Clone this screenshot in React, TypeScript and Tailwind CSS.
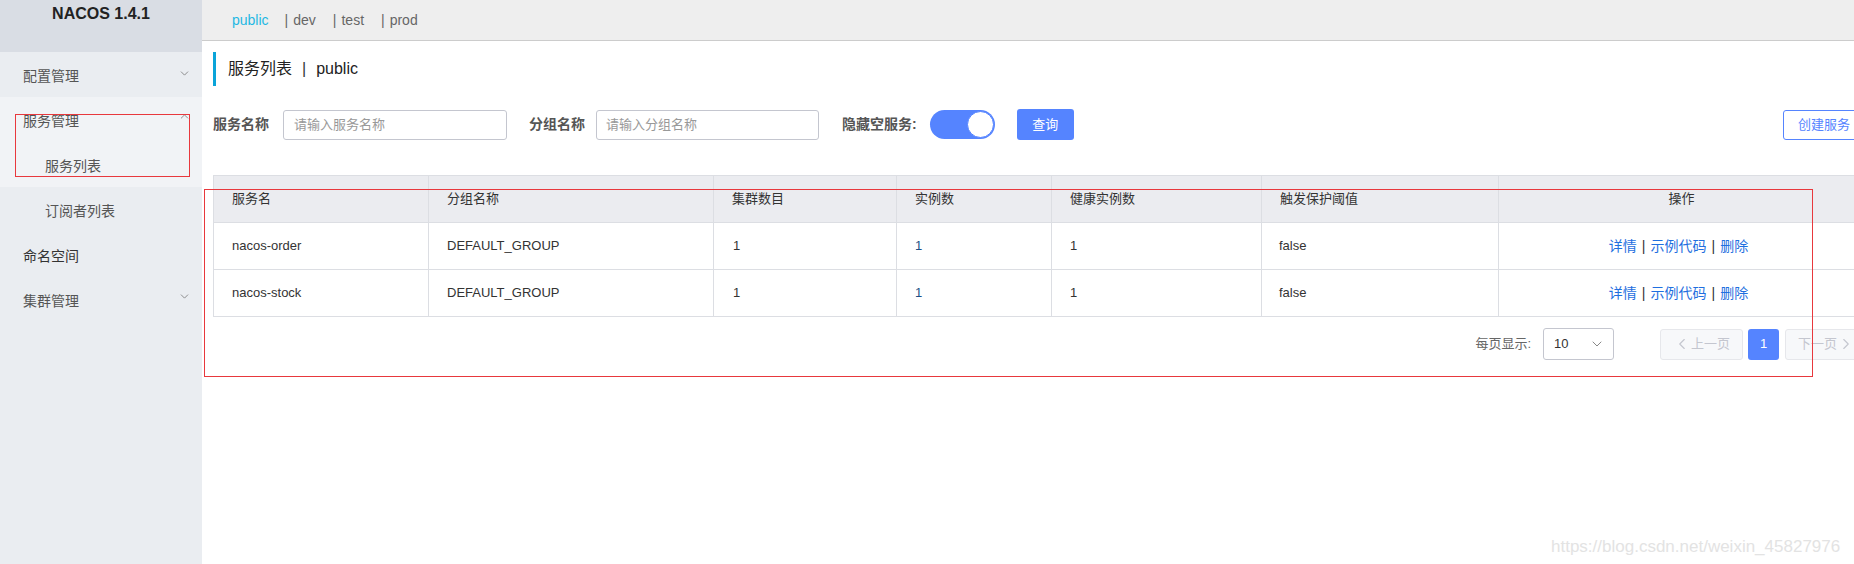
import { ChevronDown, ChevronUp, ChevronLeft, ChevronRight } from 'lucide-react';

const font = { fontFamily: '"Liberation Sans", "Noto Sans CJK SC", sans-serif' };

const columns = [
  { label: '服务名', w: 'w-[215px]' },
  { label: '分组名称', w: 'w-[285px]' },
  { label: '集群数目', w: 'w-[183px]' },
  { label: '实例数', w: 'w-[155px]' },
  { label: '健康实例数', w: 'w-[210px]' },
  { label: '触发保护阈值', w: 'w-[237px]' },
];

const services = [
  { name: 'nacos-order', group: 'DEFAULT_GROUP', clusters: 1, instances: 1, healthy: 1, threshold: 'false' },
  { name: 'nacos-stock', group: 'DEFAULT_GROUP', clusters: 1, instances: 1, healthy: 1, threshold: 'false' },
];

const Sidebar = () => (
  <div className="w-[202px] shrink-0 h-[564px] bg-[#eaedf1] text-[14px] text-[#333]">
    <div className="h-[52px] bg-[#d9dde4] flex justify-center pt-[2px]">
      <span className="text-[16px] font-bold text-[#222]">NACOS 1.4.1</span>
    </div>
    <div className="h-[45px] flex items-center justify-between pt-[3px] pl-[23px] pr-[11px] text-[#555]">
      <span>配置管理</span>
      <ChevronDown className="w-[13px] h-[13px] text-[#777] -mt-[6px]" strokeWidth={1.5} />
    </div>
    <div className="bg-[#f1f3f6]">
      <div className="h-[45px] flex items-center justify-between pt-[3px] pl-[23px] pr-[11px] text-[#555]">
        <span>服务管理</span>
        <ChevronUp className="w-[13px] h-[13px] text-[#777] -mt-[10px]" strokeWidth={1.5} />
      </div>
      <div className="h-[45px] flex items-center pt-[3px] pl-[45px] text-[#555]">服务列表</div>
    </div>
    <div className="h-[45px] flex items-center pt-[3px] pl-[45px] text-[#555]">订阅者列表</div>
    <div className="h-[45px] flex items-center pt-[3px] pl-[23px] text-[#333]">命名空间</div>
    <div className="h-[45px] flex items-center justify-between pt-[3px] pl-[23px] pr-[11px] text-[#555]">
      <span>集群管理</span>
      <ChevronDown className="w-[13px] h-[13px] text-[#777] -mt-[10px]" strokeWidth={1.5} />
    </div>
  </div>
);

const App = () => {
  return (
    <div className="relative w-[1854px] h-[564px] overflow-hidden bg-white flex" style={font}>
      <Sidebar />

      <div className="flex-1 min-w-0">
        {/* namespace tabs */}
        <div className="h-[41px] bg-[#eeeeee] border-b border-[#cccccc] flex items-center pl-[30px] text-[14px] text-[#666]">
          <span className="text-[#1fb8e3]">public</span>
          <span className="ml-[16px] text-[#666]">|</span>
          <span className="ml-[5px]">dev</span>
          <span className="ml-[17px] text-[#666]">|</span>
          <span className="ml-[5px]">test</span>
          <span className="ml-[17px] text-[#666]">|</span>
          <span className="ml-[5px]">prod</span>
        </div>

        <div className="w-[1652px] ml-[11px]">
          {/* title */}
          <div className="mt-[11px] h-[34px] border-l-[3px] border-[#0aa4d9] pl-[12px] flex items-center text-[16px] text-[#222]">
            <span>服务列表</span>
            <span className="mx-[10px] text-[#333]">|</span>
            <span>public</span>
          </div>

          {/* filters */}
          <div className="mt-[23px] h-[31px] flex items-center text-[14px]">
            <span className="font-bold text-[#555]">服务名称</span>
            <div className="ml-[14px] w-[224px] h-[30px] border border-[#c4c6cf] rounded-[3px] flex items-center pl-[10px] text-[13px] text-[#999]">
              请输入服务名称
            </div>
            <span className="ml-[22px] font-bold text-[#555]">分组名称</span>
            <div className="ml-[11px] w-[223px] h-[30px] border border-[#c4c6cf] rounded-[3px] flex items-center pl-[9px] text-[13px] text-[#999]">
              请输入分组名称
            </div>
            <span className="ml-[23px] font-bold text-[#555]">隐藏空服务:</span>
            <div className="ml-[13px] w-[65px] h-[29px] rounded-full bg-[#5584ff] flex items-center justify-end pr-[1px]">
              <div className="w-[27px] h-[27px] rounded-full bg-white border border-[#5584ff]" />
            </div>
            <button className="ml-[22px] w-[57px] h-[31px] rounded-[3px] bg-[#5584ff] text-white text-[13px]">查询</button>
            <button className="ml-auto w-[82px] h-[30px] rounded-[3px] border border-[#5584ff] text-[#5584ff] text-[13px] bg-white">
              创建服务
            </button>
          </div>

          {/* table */}
          <div className="mt-[35px] border border-[#dcdee3] text-[13px] text-[#333]">
            <div className="flex h-[47px] bg-[#ebecf0] border-b border-[#dcdee3]">
              {columns.map((c) => (
                <div key={c.label} className={`${c.w} shrink-0 border-r border-[#dcdee3] pl-[18px] flex items-center`}>
                  {c.label}
                </div>
              ))}
              <div className="flex-1 flex items-center justify-center">操作</div>
            </div>
            {services.map((s, i) => (
              <div
                key={s.name}
                className={`flex items-center ${i === 0 ? 'h-[47px] border-b border-[#dcdee3]' : 'h-[46px]'}`}
              >
                <div className="w-[215px] shrink-0 h-full border-r border-[#dcdee3] pl-[18px] flex items-center">{s.name}</div>
                <div className="w-[285px] shrink-0 h-full border-r border-[#dcdee3] pl-[18px] flex items-center">{s.group}</div>
                <div className="w-[183px] shrink-0 h-full border-r border-[#dcdee3] pl-[19px] flex items-center">{s.clusters}</div>
                <div className="w-[155px] shrink-0 h-full border-r border-[#dcdee3] pl-[18px] flex items-center text-[#1d4f86]">{s.instances}</div>
                <div className="w-[210px] shrink-0 h-full border-r border-[#dcdee3] pl-[18px] flex items-center">{s.healthy}</div>
                <div className="w-[237px] shrink-0 h-full border-r border-[#dcdee3] pl-[17px] flex items-center">{s.threshold}</div>
                <div className="flex-1 h-full flex items-center justify-center text-[14px] text-[#1f6fe0] pr-[6px]">
                  <span>详情</span>
                  <span className="mx-[5px] text-[#333]">|</span>
                  <span>示例代码</span>
                  <span className="mx-[5px] text-[#333]">|</span>
                  <span>删除</span>
                </div>
              </div>
            ))}
          </div>

          {/* pagination */}
          <div className="mt-[11px] flex items-center justify-end text-[13px] -mr-[3px]">
            <span className="text-[#666]">每页显示:</span>
            <div className="ml-[12px] w-[71px] h-[32px] border border-[#c4c6cf] rounded-[3px] flex items-center justify-between pl-[10px] pr-[8px] text-[#333]">
              <span>10</span>
              <ChevronDown className="w-[16px] h-[16px] text-[#888]" strokeWidth={1.5} />
            </div>
            <div className="ml-[46px] w-[83px] h-[31px] border border-[#e6e7eb] rounded-[3px] bg-[#f7f8fa] flex items-center justify-center text-[#c4c6cf]">
              <ChevronLeft className="w-[18px] h-[18px]" strokeWidth={1.5} />
              <span>上一页</span>
            </div>
            <div className="ml-[5px] w-[31px] h-[31px] rounded-[3px] bg-[#5584ff] text-white flex items-center justify-center">1</div>
            <div className="ml-[6px] w-[83px] h-[31px] border border-[#e6e7eb] rounded-[3px] bg-[#f7f8fa] flex items-center justify-center text-[#c4c6cf]">
              <span>下一页</span>
              <ChevronRight className="w-[18px] h-[18px]" strokeWidth={1.5} />
            </div>
          </div>
        </div>
      </div>

      {/* red annotation boxes */}
      <div className="absolute left-[15px] top-[114px] w-[175px] h-[63px] border border-[#e8383d]" />
      <div className="absolute left-[204px] top-[189px] w-[1609px] h-[188px] border border-[#e8383d]" />

      {/* watermark */}
      <div className="absolute left-[1551px] top-[534px] text-[17px] text-[#e3e3e3]">
        https://blog.csdn.net/weixin_45827976
      </div>
    </div>
  );
};

export default App;
